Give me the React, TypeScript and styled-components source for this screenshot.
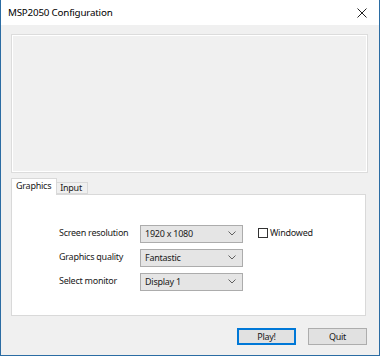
import styled, { createGlobalStyle } from 'styled-components';

const GlobalStyle = createGlobalStyle`
    html, body {
        margin: 0;
        padding: 0;
        background: #ffffff;
    }
    * {
        box-sizing: border-box;
    }
`;

const font = '"Segoe UI", "Noto Sans", "DejaVu Sans", sans-serif';

const ChevronDown = () => (
    <svg width="8" height="5" viewBox="0 0 8 5">
        <path d="M0.5 0.5 L4 4 L7.5 0.5" fill="none" stroke="#606060" strokeWidth="1" />
    </svg>
);

type DropdownProps = {
    value: string;
};

const Dropdown = ({ value }: DropdownProps) => (
    <Styled.Select>
        <span>{value}</span>
        <ChevronDown />
    </Styled.Select>
);

export default function App() {
    const rows = [
        { label: 'Screen resolution', value: '1920 x 1080' },
        { label: 'Graphics quality', value: 'Fantastic' },
        { label: 'Select monitor', value: 'Display 1' },
    ];

    return (
        <>
            <GlobalStyle />
            <Styled.Window>
                <Styled.TitleBar>
                    <Styled.Title>MSP2050 Configuration</Styled.Title>
                    <Styled.Close>
                        <svg width="10" height="10" viewBox="0 0 10 10">
                            <path d="M0.5 0.5 L9.5 9.5 M9.5 0.5 L0.5 9.5" stroke="#222" strokeWidth="1" />
                        </svg>
                    </Styled.Close>
                </Styled.TitleBar>
                <Styled.Body>
                    <Styled.Banner />
                    <Styled.Tabs>
                        <Styled.Tab active>Graphics</Styled.Tab>
                        <Styled.Tab>Input</Styled.Tab>
                    </Styled.Tabs>
                    <Styled.Panel>
                        <Styled.Form>
                            {rows.map((row) => (
                                <Styled.Row key={row.label}>
                                    <Styled.Label>{row.label}</Styled.Label>
                                    <Dropdown value={row.value} />
                                </Styled.Row>
                            ))}
                        </Styled.Form>
                        <Styled.CheckRow>
                            <Styled.CheckBox />
                            <Styled.CheckLabel>Windowed</Styled.CheckLabel>
                        </Styled.CheckRow>
                    </Styled.Panel>
                    <Styled.Footer>
                        <Styled.Button primary>Play!</Styled.Button>
                        <Styled.Button>Quit</Styled.Button>
                    </Styled.Footer>
                </Styled.Body>
            </Styled.Window>
        </>
    );
}

const Styled = {
    Window: styled.div({
        width: '380px',
        height: '356px',
        display: 'flex',
        flexDirection: 'column',
        border: '1px solid #2b6ca3',
        borderTop: 'none',
        fontFamily: font,
        fontSize: '9px',
        letterSpacing: '-0.25px',
        color: '#1a1a1a',
        background: '#f0f0f0',
        whiteSpace: 'nowrap',
    }),
    TitleBar: styled.div({
        height: '25px',
        background: '#ffffff',
        display: 'flex',
        alignItems: 'center',
        justifyContent: 'space-between',
        paddingLeft: '7px',
    }),
    Title: styled.div({
        fontSize: '9.8px',
        letterSpacing: '-0.2px',
        color: '#000',
    }),
    Close: styled.div({
        width: '34px',
        height: '25px',
        display: 'flex',
        alignItems: 'center',
        justifyContent: 'center',
    }),
    Body: styled.div({
        flex: 1,
        display: 'flex',
        flexDirection: 'column',
        padding: '9px 11px 0 9px',
    }),
    Banner: styled.div({
        height: '139px',
        border: '1px solid #dcdcdc',
        boxShadow: 'inset 1px 1px 0 #ffffff, inset -1px -1px 0 #ffffff',
        background: '#f0f0f0',
        marginLeft: '1px',
    }),
    Tabs: styled.div({
        display: 'flex',
        alignItems: 'flex-end',
        marginTop: '5px',
        height: '16px',
        paddingLeft: '1px',
        position: 'relative',
        zIndex: 1,
    }),
    Tab: styled.div<{ active?: boolean }>(({ active }) => ({
        height: active ? '17px' : '12px',
        padding: active ? '0 5px 0 4px' : '0 5px 0 3px',
        marginBottom: active ? '-1px' : '0',
        background: active ? '#ffffff' : '#f0f0f0',
        border: '1px solid #d9d9d9',
        borderBottom: active ? 'none' : '1px solid #d9d9d9',
        borderLeftWidth: active ? '1px' : '0',
        lineHeight: active ? '14px' : '10px',
    })),
    Panel: styled.div({
        height: '122px',
        background: '#ffffff',
        border: '1px solid #d9d9d9',
        marginLeft: '1px',
        marginRight: '2px',
        display: 'flex',
        alignItems: 'flex-start',
        padding: '30px 0 0 47px',
    }),
    Form: styled.div({
        display: 'flex',
        flexDirection: 'column',
        gap: '6.5px',
    }),
    Row: styled.div({
        display: 'flex',
        alignItems: 'center',
        height: '17.5px',
    }),
    Label: styled.div({
        width: '81px',
        marginTop: '-2px',
    }),
    Select: styled.div({
        width: '103px',
        height: '17.5px',
        background: '#e5e5e5',
        border: '1px solid #acacac',
        display: 'flex',
        alignItems: 'center',
        justifyContent: 'space-between',
        padding: '0 6px 0 4px',
    }),
    CheckRow: styled.div({
        display: 'flex',
        alignItems: 'center',
        marginLeft: '15px',
        marginTop: '2px',
        gap: '2px',
    }),
    CheckBox: styled.div({
        width: '10px',
        height: '10px',
        border: '1px solid #333333',
        background: '#ffffff',
    }),
    CheckLabel: styled.div({
        marginTop: '-1px',
    }),
    Footer: styled.div({
        display: 'flex',
        justifyContent: 'flex-end',
        gap: '12px',
        marginTop: '12px',
        paddingRight: '1px',
    }),
    Button: styled.div<{ primary?: boolean }>(({ primary }) => ({
        width: '59px',
        height: '17px',
        background: '#e1e1e1',
        border: primary ? '1px solid #0078d7' : '1px solid #adadad',
        boxShadow: primary ? 'inset 0 0 0 1px #0078d7' : 'none',
        display: 'flex',
        alignItems: 'center',
        justifyContent: 'center',
    })),
};
